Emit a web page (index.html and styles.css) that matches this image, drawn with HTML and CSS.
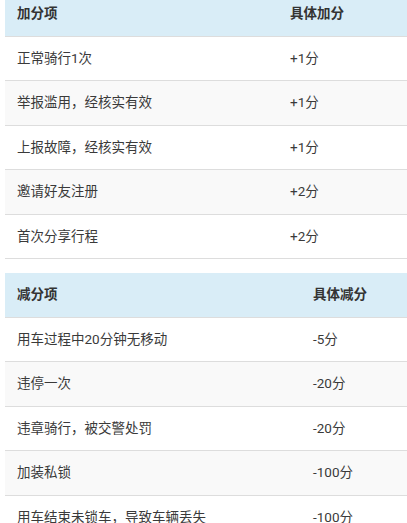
FILE: index.html
```html
<!DOCTYPE html>
<html lang="zh-CN">
<head>
<meta charset="utf-8">
<link rel="stylesheet" href="styles.css">
</head>
<body>
<div class="page">
  <table class="tbl tbl-plus">
    <thead>
      <tr class="head"><th class="c1">加分项</th><th>具体加分</th></tr>
    </thead>
    <tbody>
      <tr><td class="c1">正常骑行1次</td><td>+1分</td></tr>
      <tr><td class="c1">举报滥用，经核实有效</td><td>+1分</td></tr>
      <tr><td class="c1">上报故障，经核实有效</td><td>+1分</td></tr>
      <tr><td class="c1">邀请好友注册</td><td>+2分</td></tr>
      <tr><td class="c1">首次分享行程</td><td>+2分</td></tr>
    </tbody>
  </table>
  <table class="tbl tbl-minus">
    <thead>
      <tr class="head"><th class="c1">减分项</th><th>具体减分</th></tr>
    </thead>
    <tbody>
      <tr><td class="c1">用车过程中20分钟无移动</td><td>-5分</td></tr>
      <tr><td class="c1">违停一次</td><td>-20分</td></tr>
      <tr><td class="c1">违章骑行，被交警处罚</td><td>-20分</td></tr>
      <tr><td class="c1">加装私锁</td><td>-100分</td></tr>
      <tr><td class="c1">用车结束未锁车，导致车辆丢失</td><td>-100分</td></tr>
    </tbody>
  </table>
</div>
</body>
</html>
```
FILE: styles.css
```css
html, body {
  margin: 0;
  padding: 0;
  overflow: hidden;
  background: #fff;
}
body {
  font-family: Roboto, "Noto Sans CJK SC", sans-serif;
  font-size: 13.5px;
  color: #333;
}
.page {
  padding-left: 5px;
  margin-top: -8px;
  width: 440px;
}
.tbl {
  width: 430px;
  border-collapse: collapse;
  table-layout: fixed;
  margin-bottom: 14px;
}
.tbl th, .tbl td {
  text-align: left;
  padding: 12px 12px;
  line-height: 19.5px;
  border-top: 1px solid #ddd;
  white-space: nowrap;
}
.tbl th {
  font-weight: bold;
  color: #333;
  border-top: none;
  padding-top: 12px;
  padding-bottom: 12px;
}
.tbl td {
  color: #3a3a3a;
}
.head {
  background: #d9edf7;
}
.tbl tbody tr:nth-child(even) {
  background: #f9f9f9;
}
.tbl tbody tr:last-child td {
  border-bottom: 1px solid #ddd;
}
.tbl-plus .c1 { width: 249px; }
.tbl-minus .c1 { width: 272px; }
```
